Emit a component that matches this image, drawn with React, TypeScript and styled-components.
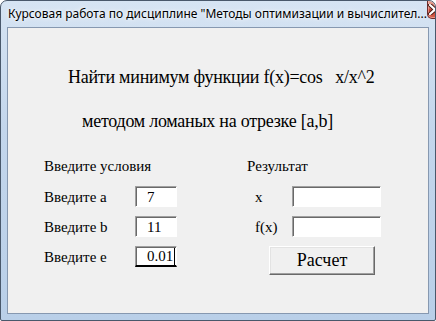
import React from "react"
import styled, { createGlobalStyle } from "styled-components"

const GlobalStyle = createGlobalStyle`
    html, body {
        margin: 0;
        padding: 0;
        background: #ffffff;
    }
    * {
        box-sizing: border-box;
    }
`

/*================ Window frame ================*/

const Window = styled.div`
    width: 436px;
    height: 321px;
    display: flex;
    flex-direction: column;
    border: 1px solid #49586b;
    border-radius: 7px 7px 2px 2px;
    background: linear-gradient(180deg, #d6e4f3 0%, #c3d6ec 40%, #b9cfe8 100%);
    overflow: hidden;
`

const TitleBar = styled.div`
    height: 26px;
    flex: none;
    display: flex;
    align-items: flex-start;
    justify-content: space-between;
    padding: 0 3px 0 7px;
`

const Title = styled.span`
    margin-top: 5px;
    font-family: "Noto Sans", "Open Sans", sans-serif;
    font-size: 12px;
    line-height: 16px;
    color: #000;
    white-space: nowrap;
    text-shadow: 0 0 6px rgba(255, 255, 255, 0.9), 0 0 3px #fff;
`

const CloseButton = styled.div`
    width: 47px;
    height: 19px;
    margin-top: -1px;
    display: flex;
    align-items: center;
    justify-content: center;
    border: 1px solid #6e2c2c;
    border-top: none;
    border-radius: 0 0 5px 5px;
    background: linear-gradient(180deg, #e8a79a 0%, #d47565 45%, #c23b2b 55%, #d6644f 100%);
    box-shadow: inset 0 0 0 1px rgba(255, 200, 190, 0.5);
`

const Client = styled.div`
    flex: 1;
    margin: 0 6px 6px 6px;
    border: 1px solid #8698b0;
    background: #f0f0f0;
    padding-top: 37px;
    font-family: "Liberation Serif", "Times New Roman", serif;
    color: #000;
`

/*================ Heading ================*/

const Heading = styled.div<{ $indent: number; $gap?: number }>`
    padding-left: ${({ $indent }) => $indent}px;
    margin-top: ${({ $gap }) => $gap ?? 0}px;
    font-size: 18px;
    line-height: 24px;
    letter-spacing: -0.25px;
    white-space: pre;
`

/*================ Form ================*/

const Form = styled.div`
    display: flex;
    margin-top: 23px;
    padding-left: 36px;
`

const Column = styled.div<{ $width?: number }>`
    width: ${({ $width }) => ($width ? `${$width}px` : "auto")};
    display: flex;
    flex-direction: column;
    gap: 9px;
`

const ColumnTitle = styled.div`
    height: 20px;
    margin-bottom: 1px;
    font-size: 15px;
    line-height: 20px;
`

const Row = styled.div<{ $label: number; $indent?: number }>`
    display: grid;
    grid-template-columns: ${({ $label }) => $label}px auto;
    align-items: center;
    height: 21px;
    padding-left: ${({ $indent }) => $indent ?? 0}px;
`

const Label = styled.span`
    font-size: 15px;
    line-height: 20px;
`

const Field = styled.div<{ $width: number; $focused?: boolean }>`
    width: ${({ $width }) => $width}px;
    height: 21px;
    display: flex;
    align-items: center;
    padding-left: 11px;
    background: #ffffff;
    border-top: 1px solid #a0a0a0;
    border-left: 1px solid #a0a0a0;
    border-right: 1px solid #ffffff;
    border-bottom: ${({ $focused }) => ($focused ? "2px solid #000" : "1px solid #ffffff")};
    box-shadow: inset 1px 1px 0 #696969;
    font-size: 15px;
    line-height: 18px;
`

const Caret = styled.span`
    display: inline-block;
    width: 1px;
    height: 17px;
    margin-left: 1px;
    background: #000;
`

const ButtonRow = styled.div`
    padding-left: 22px;
`

const Button = styled.button`
    width: 106px;
    height: 29px;
    padding: 0;
    background: #f0f0f0;
    border-top: 1px solid #ffffff;
    border-left: 1px solid #ffffff;
    border-right: 1px solid #696969;
    border-bottom: 1px solid #696969;
    box-shadow: inset -1px -1px 0 #a0a0a0, inset 1px 1px 0 #e3e3e3;
    font-family: "Liberation Serif", "Times New Roman", serif;
    font-size: 18px;
    color: #000;
`

const CloseIcon = () => (
    <svg width="14" height="11" viewBox="0 0 14 11">
        <path
            d="M2 1 L12 10 M12 1 L2 10"
            stroke="#4a1a14"
            strokeWidth="4"
            strokeLinecap="round"
        />
        <path
            d="M2 1 L12 10 M12 1 L2 10"
            stroke="#ffffff"
            strokeWidth="2.2"
            strokeLinecap="round"
        />
    </svg>
)

const App = () => {
    return (
        <>
            <GlobalStyle />
            <Window>
                <TitleBar>
                    <Title>Курсовая работа по дисциплине "Методы оптимизации и вычислител...</Title>
                    <CloseButton>
                        <CloseIcon />
                    </CloseButton>
                </TitleBar>

                <Client>
                    <Heading $indent={60}>Найти минимум функции f(x)=cos   x/x^2</Heading>
                    <Heading $indent={74} $gap={20}>
                        методом ломаных на отрезке [a,b]
                    </Heading>

                    <Form>
                        <Column $width={203}>
                            <ColumnTitle>Введите условия</ColumnTitle>
                            <Row $label={91}>
                                <Label>Введите a</Label>
                                <Field $width={42}>7</Field>
                            </Row>
                            <Row $label={91}>
                                <Label>Введите b</Label>
                                <Field $width={42}>11</Field>
                            </Row>
                            <Row $label={91}>
                                <Label>Введите е</Label>
                                <Field $width={42} $focused>
                                    0.01
                                    <Caret />
                                </Field>
                            </Row>
                        </Column>

                        <Column>
                            <ColumnTitle>Результат</ColumnTitle>
                            <Row $label={37} $indent={8}>
                                <Label>x</Label>
                                <Field $width={89} />
                            </Row>
                            <Row $label={37} $indent={8}>
                                <Label>f(x)</Label>
                                <Field $width={89} />
                            </Row>
                            <ButtonRow>
                                <Button>Расчет</Button>
                            </ButtonRow>
                        </Column>
                    </Form>
                </Client>
            </Window>
        </>
    )
}

export default App
